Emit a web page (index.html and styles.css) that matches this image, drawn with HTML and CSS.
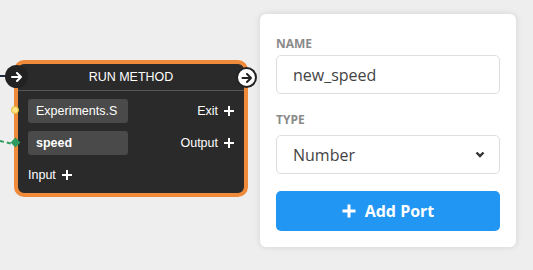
FILE: index.html
```html
<!DOCTYPE html>
<html>
<head>
<meta charset="utf-8">
<link rel="stylesheet" href="styles.css">
</head>
<body>
<div class="stage">
  <div class="canvas">
    <div class="wire-exec"></div>
    <svg class="wire-data" width="16" height="10" viewBox="0 0 16 10">
      <path d="M0 3 L13 6" stroke="#2e9b5e" stroke-width="2" stroke-dasharray="4 3" fill="none"/>
    </svg>
    <div class="node">
      <span class="exec exec-in">
        <svg width="12" height="10" viewBox="0 0 12 10"><path d="M1 5 H10 M6 1 L10 5 L6 9" stroke="#fff" stroke-width="2" fill="none" stroke-linecap="round" stroke-linejoin="round"/></svg>
      </span>
      <span class="exec exec-out">
        <svg width="12" height="10" viewBox="0 0 12 10"><path d="M1.5 5 H10 M6 1 L10 5 L6 9" stroke="#222" stroke-width="2" fill="none" stroke-linecap="round" stroke-linejoin="round"/></svg>
      </span>
      <span class="dot dot-yellow"></span>
      <span class="dot dot-green"></span>
      <div class="node-head">RUN METHOD</div>
      <div class="node-body">
        <div class="row">
          <span class="field">Experiments.S</span>
          <span class="port">Exit <svg class="plus" width="10" height="10" viewBox="0 0 10 10"><path d="M5 0 V10 M0 5 H10" stroke="#fff" stroke-width="2"/></svg></span>
        </div>
        <div class="row">
          <span class="field field-bold">speed</span>
          <span class="port">Output <svg class="plus" width="10" height="10" viewBox="0 0 10 10"><path d="M5 0 V10 M0 5 H10" stroke="#fff" stroke-width="2"/></svg></span>
        </div>
        <div class="row">
          <span class="port">Input <svg class="plus" width="10" height="10" viewBox="0 0 10 10"><path d="M5 0 V10 M0 5 H10" stroke="#fff" stroke-width="2"/></svg></span>
        </div>
      </div>
    </div>
  </div>
  <div class="panel">
    <div class="label">NAME</div>
    <div class="input">new_speed</div>
    <div class="label label-type">TYPE</div>
    <div class="input select">
      <span>Number</span>
      <svg width="10" height="7" viewBox="0 0 10 7"><path d="M1.5 1.5 L5 5 L8.5 1.5" stroke="#333" stroke-width="2.4" fill="none"/></svg>
    </div>
    <div class="button">
      <svg width="14" height="14" viewBox="0 0 14 14"><path d="M7 0.5 V13.5 M0.5 7 H13.5" stroke="#fff" stroke-width="3"/></svg>
      <span>Add Port</span>
    </div>
  </div>
</div>
</body>
</html>
```
FILE: styles.css
```css
* { box-sizing: border-box; }
html, body { margin: 0; padding: 0; }
body {
  background: #eeeeee;
  width: 533px;
  height: 270px;
  overflow: hidden;
}
.stage {
  display: flex;
  align-items: flex-start;
}
.canvas {
  position: relative;
  width: 260px;
  height: 270px;
}
.wire-exec {
  position: absolute;
  left: 0;
  top: 75px;
  width: 8px;
  height: 2px;
  background: #1f2b3a;
}
.wire-data {
  position: absolute;
  left: 0;
  top: 138px;
}
.node {
  position: relative;
  margin: 60px 0 0 14px;
  width: 234px;
  border: 4px solid #f08a3b;
  border-radius: 10px;
  background: #2a2a2a;
  font-family: "Liberation Sans", Arial, sans-serif;
  font-size: 12.5px;
  color: #fff;
}
.node-head {
  height: 27px;
  border-bottom: 1px solid #575757;
  display: flex;
  align-items: center;
  justify-content: center;
  padding-bottom: 1px;
}
.node-body {
  padding: 8px 10px 6px 10px;
  display: flex;
  flex-direction: column;
  gap: 8px;
}
.row {
  height: 24px;
  display: flex;
  align-items: center;
  justify-content: space-between;
}
.field {
  width: 100px;
  height: 24px;
  background: #4a4a4a;
  border-radius: 3px;
  padding-left: 8px;
  display: flex;
  align-items: center;
}
.field-bold { font-weight: bold; }
.port {
  display: flex;
  align-items: center;
}
.row:last-child { justify-content: flex-start; }
.plus {
  margin-left: 6px;
  display: block;
}
.exec {
  position: absolute;
  border-radius: 50%;
  display: flex;
  align-items: center;
  justify-content: center;
}
.exec-in {
  left: -13px;
  top: 1px;
  width: 23px;
  height: 23px;
  background: #222;
}
.exec-out {
  right: -13px;
  top: 3px;
  width: 21px;
  height: 21px;
  background: #fff;
  border: 2px solid #222;
}
.dot {
  position: absolute;
}
.dot-yellow {
  left: -7px;
  top: 42px;
  width: 8px;
  height: 8px;
  border-radius: 50%;
  background: #ffe88a;
  border: 1px solid #e0b830;
}
.dot-green {
  left: -6px;
  top: 75px;
  width: 7px;
  height: 7px;
  background: #2e9b5e;
  transform: rotate(45deg);
}
.panel {
  margin-top: 14px;
  width: 256px;
  background: #fff;
  border-radius: 6px;
  box-shadow: 0 0 6px rgba(0,0,0,0.12);
  padding: 23px 16px 16px 16px;
  font-family: "Open Sans", sans-serif;
}
.label {
  font-size: 12px;
  font-weight: bold;
  color: #8a8a8a;
  line-height: 14px;
  height: 14px;
  margin-bottom: 4px;
}
.label-type {
  margin-top: 19px;
  margin-bottom: 8px;
}
.input {
  height: 39px;
  border: 1px solid #dedede;
  border-radius: 5px;
  padding: 0 16px;
  display: flex;
  align-items: center;
  font-size: 16px;
  color: #444;
}
.select {
  justify-content: space-between;
}
.select svg { margin-right: -2px; }
.button {
  margin-top: 17px;
  height: 40px;
  background: #2196f3;
  border-radius: 5px;
  display: flex;
  align-items: center;
  justify-content: center;
  gap: 9px;
  color: #fff;
  font-size: 16px;
  font-weight: bold;
}
```
